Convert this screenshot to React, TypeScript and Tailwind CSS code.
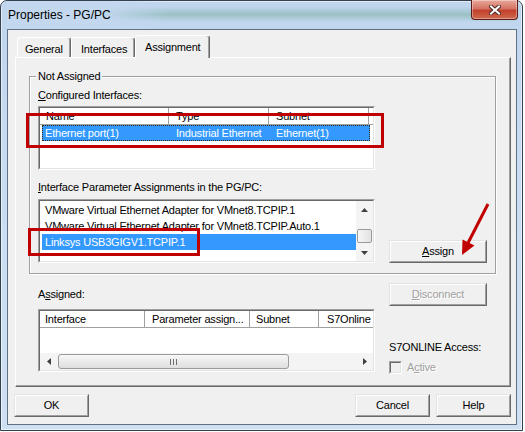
import type { ReactNode } from 'react'

// classic 3D edges: sunken well for list views and check boxes
function Sunken({ className = '', fill = 'bg-white', children }: { className?: string; fill?: string; children?: ReactNode }) {
  return (
    <div className={`border border-b-white border-l-[#a0a0a0] border-r-white border-t-[#a0a0a0] ${className}`}>
      <div className={`relative flex h-full flex-col overflow-hidden border border-b-[#e3e3e3] border-l-[#696969] border-r-[#e3e3e3] border-t-[#696969] ${fill}`}>
        {children}
      </div>
    </div>
  )
}

function PushButton({ children, className = '', disabled = false }: { children: ReactNode; className?: string; disabled?: boolean }) {
  return (
    <div className={`h-[23px] border border-b-[#696969] border-l-[#e3e3e3] border-r-[#696969] border-t-[#e3e3e3] ${className}`}>
      <div
        className={`flex h-full items-center justify-center border border-b-[#a0a0a0] border-l-white border-r-[#a0a0a0] border-t-white bg-[#f0f0f0] ${
          disabled ? 'text-[#a0a0a0] [text-shadow:1px_1px_0_#fff]' : 'text-black'
        }`}
      >
        {children}
      </div>
    </div>
  )
}

function HeaderCell({ children, className = '' }: { children: ReactNode; className?: string }) {
  return (
    <div className={`flex h-full shrink-0 items-center whitespace-nowrap border-b border-r border-b-[#a0a0a0] border-r-[#a0a0a0] ${className}`}>
      {children}
    </div>
  )
}

function Arrow({ dir }: { dir: 'up' | 'down' | 'left' | 'right' }) {
  const pts = {
    up: '0,4 3.5,0 7,4',
    down: '0,0 7,0 3.5,4',
    left: '4,0 4,7 0,3.5',
    right: '0,0 4,3.5 0,7',
  }[dir]
  const vertical = dir === 'up' || dir === 'down'
  return (
    <svg width={vertical ? 7 : 4} height={vertical ? 4 : 7} viewBox={vertical ? '0 0 7 4' : '0 0 4 7'}>
      <polygon points={pts} fill="#404040" />
    </svg>
  )
}

function VScrollBar() {
  return (
    <div className="flex w-[17px] shrink-0 flex-col bg-[#f4f4f4]">
      <div className="flex h-[17px] items-center justify-center">
        <Arrow dir="up" />
      </div>
      <div className="flex flex-1 flex-col justify-end px-[1px] pb-[1px]">
        <div className="h-[14px] rounded-[2px] border border-[#9b9b9b] bg-[linear-gradient(90deg,#f6f6f6,#e2e2e2)]" />
      </div>
      <div className="flex h-[17px] items-center justify-center">
        <Arrow dir="down" />
      </div>
    </div>
  )
}

function HScrollBar() {
  return (
    <div className="flex h-[17px] shrink-0 bg-[#f4f4f4]">
      <div className="flex w-[17px] items-center justify-center">
        <Arrow dir="left" />
      </div>
      <div className="flex flex-1 py-[1px] pl-[1px]">
        <div className="flex w-[231px] items-center justify-center gap-[2px] rounded-[3px] border border-[#9b9b9b] bg-[linear-gradient(180deg,#f7f7f7,#dedede)]">
          <span className="h-[6px] w-px bg-[#6e6e6e]" />
          <span className="h-[6px] w-px bg-[#6e6e6e]" />
          <span className="h-[6px] w-px bg-[#6e6e6e]" />
        </div>
      </div>
      <div className="flex w-[17px] items-center justify-center">
        <Arrow dir="right" />
      </div>
    </div>
  )
}

function Tab({ label, active = false, className = '' }: { label: string; active?: boolean; className?: string }) {
  return (
    <div
      className={`flex shrink-0 items-start rounded-t-[3px] border-l border-r border-t border-l-white border-r-[#696969] border-t-white bg-[#f0f0f0] shadow-[inset_-1px_0_0_#a0a0a0] ${
        active ? 'relative z-10 -mb-px h-[23px] pt-[5px]' : 'h-[20px] pt-[5px]'
      } ${className}`}
    >
      {label}
    </div>
  )
}

const pgpcEntries = [
  'VMware Virtual Ethernet Adapter for VMnet8.TCPIP.1',
  'VMware Virtual Ethernet Adapter for VMnet8.TCPIP.Auto.1',
  'Linksys USB3GIGV1.TCPIP.1',
]

export default function App() {
  return (
    <div className="relative h-[432px] w-[525px] bg-white font-['Liberation_Sans',Arial,sans-serif] text-[11px] leading-[13px] tracking-[-0.2px] text-black">
      {/* window frame */}
      <div className="flex h-[431px] w-[523px] flex-col rounded-t-[7px] border border-[#34414f] bg-[linear-gradient(180deg,#bfd5ee_0%,#c9dcf1_40%,#cfe0f3_100%)] pb-[5px] pl-[6px] pr-[5px] shadow-[inset_0_0_0_1px_rgba(255,255,255,0.55)]">
        <div className="flex h-[28px] shrink-0 items-start justify-between bg-[linear-gradient(90deg,#c3d8ef_0%,#c3d8ef_18%,rgba(195,216,239,0)_32%),linear-gradient(180deg,rgba(0,0,0,0)_20%,rgba(96,160,130,0.4)_48%,rgba(0,0,0,0)_75%)]">
          <span className="pl-[1px] pt-[7px] text-[12px] leading-[14px] tracking-normal">Properties - PG/PC</span>
          <div className="-mr-px -mt-px flex h-[20px] w-[47px] items-center justify-center rounded-b-[4px] border border-t-0 border-[#5b1a14] bg-[linear-gradient(180deg,#e8a99b_0%,#d47363_45%,#c2402c_55%,#cf6a4e_100%)] shadow-[inset_0_0_0_1px_rgba(255,255,255,0.35)]">
            <svg width="12" height="10" viewBox="0 0 12 10">
              <path d="M2 1.5 L10 8.5 M10 1.5 L2 8.5" stroke="#4b2a26" strokeWidth="4" strokeLinecap="square" />
              <path d="M2 1.5 L10 8.5 M10 1.5 L2 8.5" stroke="#ffffff" strokeWidth="2" strokeLinecap="square" />
            </svg>
          </div>
        </div>

        {/* client area */}
        <div className="flex flex-1 flex-col border border-[#5f7184] bg-[#f0f0f0] pl-[7px] pr-[5px] pt-[5px]">
          <div className="flex h-[22px] items-end pl-[2px]">
            <Tab label="General" className="w-[54px] pl-[7px]" />
            <Tab label="Interfaces" className="w-[64px] pl-[9px]" />
            <Tab label="Assignment" active className="w-[75px] pl-[9px]" />
          </div>

          {/* tab page */}
          <div className="h-[330px] border border-b-[#696969] border-l-white border-r-[#696969] border-t-white shadow-[inset_-1px_-1px_0_#a0a0a0]">
            <div className="ml-[13px] mt-[18px] h-[198px] w-[467px] border border-[#a0a0a0] shadow-[inset_1px_1px_0_#fff,1px_1px_0_#fff]">
              <div className="-mt-[7px] ml-[6px] w-fit bg-[#f0f0f0] px-[2px]">Not Assigned</div>
              <div className="ml-[8px] flex items-end">
                <div className="w-[337px]">
                  <div className="mt-[6px]">
                    <u>C</u>onfigured Interfaces:
                  </div>
                  <Sunken className="mt-[4px] h-[64px]">
                    <div className="flex h-[17px] shrink-0">
                      <HeaderCell className="w-[129px] pl-[6px]">Name</HeaderCell>
                      <HeaderCell className="w-[100px] pl-[7px]">Type</HeaderCell>
                      <HeaderCell className="w-[100px] pl-[7px]">Subnet</HeaderCell>
                      <div className="flex-1 border-b border-b-[#a0a0a0]" />
                    </div>
                    <div className="ml-[2px] flex h-[16px] w-[328px] shrink-0 items-center whitespace-nowrap bg-[#3399ff] text-white outline-1 -outline-offset-1 outline-dotted outline-[#3b2a10]">
                      <span className="w-[126px] pl-[3px]">Ethernet port(1)</span>
                      <span className="w-[100px] pl-[8px]">Industrial Ethernet</span>
                      <span className="w-[100px] pl-[8px]">Ethernet(1)</span>
                    </div>
                  </Sunken>
                  <div className="mt-[11px]">
                    <u>I</u>nterface Parameter Assignments in the PG/PC:
                  </div>
                  <Sunken className="mt-[5px] h-[64px]">
                    <div className="flex h-full">
                      <div className="flex-1 pt-px">
                        {pgpcEntries.map((entry, i) => (
                          <div
                            key={entry}
                            className={`ml-[2px] flex h-[16px] items-center whitespace-nowrap pl-[3px] ${i === 2 ? 'bg-[#3399ff] text-white' : ''}`}
                          >
                            {entry}
                          </div>
                        ))}
                      </div>
                      <VScrollBar />
                    </div>
                  </Sunken>
                </div>
                <PushButton className="ml-[14px] w-[98px]">
                  <u>A</u>ssign
                </PushButton>
              </div>
            </div>

            {/* assigned section */}
            <div className="ml-[22px] flex">
              <div className="w-[337px]">
                <div className="mt-[14px]">
                  A<u>s</u>signed:
                </div>
                <Sunken className="mt-[8px] h-[63px]">
                  <div className="flex h-[17px] shrink-0">
                    <HeaderCell className="w-[105px] pl-[5px]">Interface</HeaderCell>
                    <HeaderCell className="w-[105px] pl-[7px]">Parameter assign...</HeaderCell>
                    <HeaderCell className="w-[69px] pl-[6px]">Subnet</HeaderCell>
                    <HeaderCell className="w-[100px] pl-[8px]">S7Online access</HeaderCell>
                  </div>
                  <div className="flex-1" />
                  <HScrollBar />
                </Sunken>
              </div>
              <div className="ml-[14px] w-[98px]">
                <PushButton disabled className="mt-[9px]">
                  <u>D</u>isconnect
                </PushButton>
                <div className="mt-[35px] whitespace-nowrap">S7ONLINE Access:</div>
                <div className="mt-[7px] flex items-center">
                  <Sunken className="h-[13px] w-[13px]" fill="bg-[#f0f0f0]" />
                  <span className="ml-[5px] text-[#a0a0a0] [text-shadow:1px_1px_0_#fff]">
                    A<u>c</u>tive
                  </span>
                </div>
              </div>
            </div>
          </div>

          <div className="mt-[7px] flex">
            <PushButton className="ml-[-1px] w-[75px]">OK</PushButton>
            <div className="flex-1" />
            <PushButton className="w-[75px]">Cancel</PushButton>
            <PushButton className="ml-[6px] w-[75px]">Help</PushButton>
          </div>
        </div>
      </div>

      {/* red callouts */}
      <div className="pointer-events-none absolute left-[26px] top-[113px] h-[35px] w-[358px] border-[3px] border-[#c00000]" />
      <div className="pointer-events-none absolute left-[28px] top-[228px] h-[28px] w-[172px] border-[3px] border-[#c00000]" />
      <svg className="pointer-events-none absolute left-0 top-0" width="525" height="432" viewBox="0 0 525 432">
        <line x1="488" y1="204" x2="468" y2="243" stroke="#c00000" strokeWidth="3" />
        <polygon points="462,255 462.5,239.5 474.5,245.5" fill="#c00000" />
      </svg>
    </div>
  )
}
